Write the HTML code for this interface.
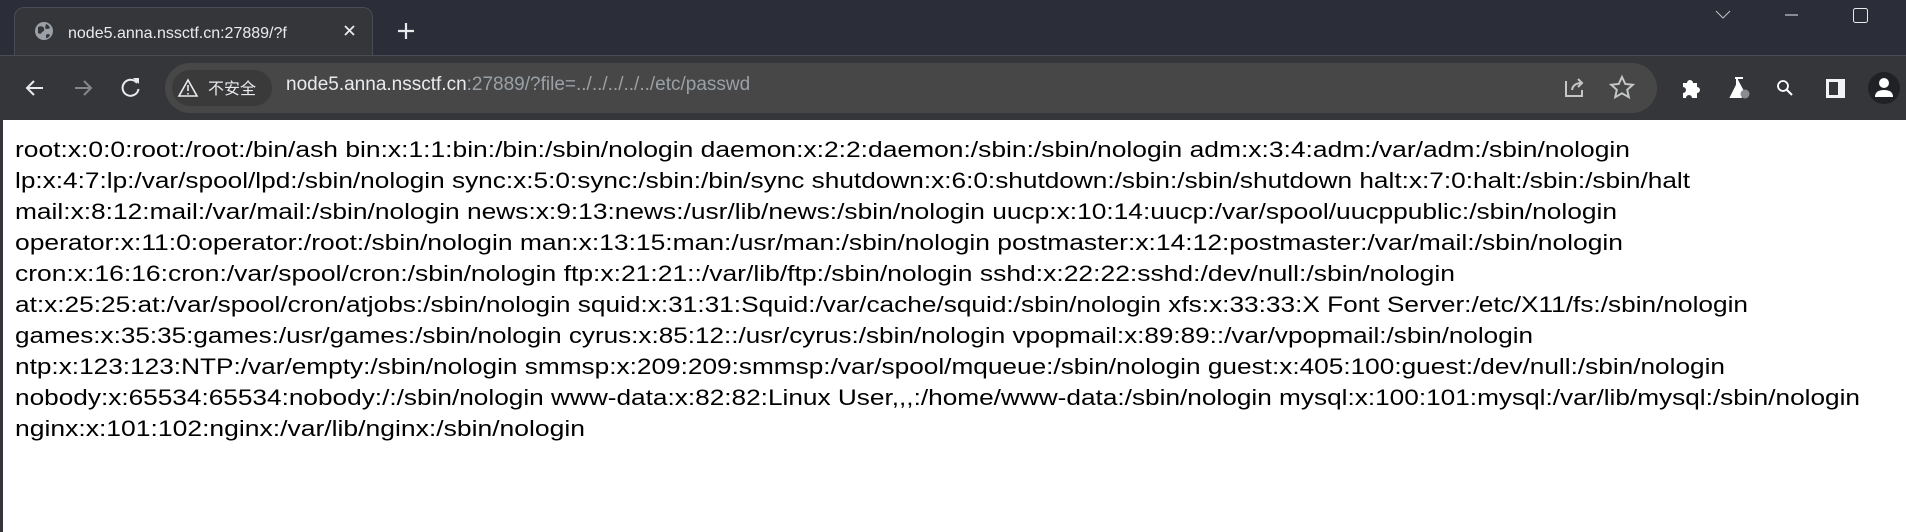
<!DOCTYPE html>
<html><head><meta charset="utf-8"><style>
html,body{margin:0;padding:0;width:1906px;height:532px;overflow:hidden;background:#fff;font-family:"Segoe UI","Liberation Sans","Noto Sans CJK SC",sans-serif}
.strip{position:absolute;left:0;top:0;width:1906px;height:55px;background:#2b2e39}
.tb{position:absolute;left:0;top:55px;width:1906px;height:65px;background:#35363a;border-top:1px solid #4a4c54;box-sizing:border-box}
.tab{position:absolute;left:14px;top:7px;width:359px;height:49px;background:#35363a;border-radius:10px 10px 0 0;border:1px solid #4a4c54;border-bottom:none;box-sizing:border-box}
.omni{position:absolute;left:165px;top:63px;width:1492px;height:50px;background:#474747;border-radius:25px}
.chip{position:absolute;left:172px;top:70px;width:100px;height:36px;background:#3a3a3b;border-radius:18px}
.t{position:absolute;color:#e8eaed;white-space:nowrap}
.lb{position:absolute;left:0;top:120px;width:3px;height:412px;background:#35363a}
</style></head><body>
<div class="strip"></div>
<div class="tab"></div>
<svg style="position:absolute;left:0;top:0" width="1906" height="120">
<circle cx="44" cy="31" r="9" fill="#9aa0a6"/>
<path d="M38 27 q4 -2 6 1 q1 3 -2 4 q-1 3 -4 1z M46 24 q3 1 4 4 q-3 2 -5 0z M46 35 q2 -2 4 0 q-1 3 -4 3z" fill="#35363a"/>
<text x="68" y="38" font-family="Segoe UI,Liberation Sans,sans-serif" font-size="16" fill="#e8eaed">node5.anna.nssctf.cn:27889/?f</text>
<path d="M345 26 l9 9 M354 26 l-9 9" stroke="#e8eaed" stroke-width="1.8"/>
<path d="M406 23 v16 M398 31 h16" stroke="#e8eaed" stroke-width="2.2"/>
<path d="M1716 11 l7 7 l7 -7" stroke="#c0c2c6" fill="none" stroke-width="1"/>
<path d="M1785 15 h13" stroke="#e8eaed" stroke-width="1"/>
<rect x="1853.5" y="8.5" width="14" height="14" rx="2" fill="none" stroke="#e8eaed" stroke-width="1"/>
</svg>
<div class="tb"></div>
<div class="omni"></div>
<div class="chip"></div>
<svg style="position:absolute;left:0;top:55px" width="1906" height="65">
<path d="M27 33 h16 M34 26 l-7 7 l7 7" stroke="#e8eaed" stroke-width="2" fill="none"/>
<path d="M75 33 h16 M84 26 l7 7 l-7 7" stroke="#85878a" stroke-width="2" fill="none"/>
<path d="M137 28 a8 8 0 1 0 1.5 6" stroke="#e8eaed" stroke-width="2" fill="none"/>
<path d="M133 23 h6 v6z" fill="#e8eaed"/>
<path d="M188 25 l9 16 h-18z" fill="none" stroke="#e8eaed" stroke-width="1.6"/>
<path d="M188 30 v6 M188 38 v1.5" stroke="#e8eaed" stroke-width="1.6"/>
<path d="M1566 26 v15 h16 v-6 M1572 35 q1 -7 10 -7 M1578 24 l4 4 l-4 4" stroke="#c4c7c5" stroke-width="2" fill="none"/>
<path d="M1622 22 l3.3 7 7.5 .8 -5.6 5 1.6 7.4 -6.8 -3.9 -6.8 3.9 1.6 -7.4 -5.6 -5 7.5 -.8z" fill="none" stroke="#c4c7c5" stroke-width="2"/>
<path d="M1683 28 h4 a3 3 0 0 1 6 0 h4 v4 a3 3 0 0 1 0 6 v5 h-5 a3 3 0 0 0 -6 0 h-3 v-5 a3 3 0 0 0 0 -6z" fill="#fff"/>
<path d="M1735 23 h8 M1737 23 v7 l-6 12 h10 l3 -6" fill="#fff" stroke="#fff" stroke-width="2"/>
<circle cx="1745" cy="39" r="4.5" fill="#8a8c90"/>
<circle cx="1783" cy="31" r="5" stroke="#fff" stroke-width="1.8" fill="none"/>
<path d="M1787 35 l5 5" stroke="#fff" stroke-width="2"/>
<rect x="1826" y="24" width="19" height="19" fill="#f1f3f4"/>
<rect x="1829" y="27" width="9" height="13" fill="#35363a"/>
<circle cx="1884" cy="33" r="16" fill="#202124"/>
<circle cx="1884" cy="28" r="5" fill="#fff"/>
<path d="M1875 42 q0 -7 9 -7 q9 0 9 7z" fill="#fff"/>
</svg>
<div class="t" style="left:208px;top:75px;font-size:16px;font-family:'Liberation Sans','Noto Sans CJK SC',sans-serif">不安全</div>
<div class="t" style="left:286px;top:74px;font-size:19px;font-family:'Segoe UI','Liberation Sans',sans-serif"><span>node5.anna.nssctf.cn</span><span style="color:#9aa0a6">:27889/?file=../../../../../etc/passwd</span></div>
<div class="lb"></div>
<svg style="position:absolute;left:0;top:0" width="1906" height="532" font-family="Segoe UI,Liberation Sans,sans-serif" font-size="22" fill="#000">
<text x="15" y="157" textLength="1615" lengthAdjust="spacingAndGlyphs">root:x:0:0:root:/root:/bin/ash bin:x:1:1:bin:/bin:/sbin/nologin daemon:x:2:2:daemon:/sbin:/sbin/nologin adm:x:3:4:adm:/var/adm:/sbin/nologin</text>
<text x="15" y="188" textLength="1675" lengthAdjust="spacingAndGlyphs">lp:x:4:7:lp:/var/spool/lpd:/sbin/nologin sync:x:5:0:sync:/sbin:/bin/sync shutdown:x:6:0:shutdown:/sbin:/sbin/shutdown halt:x:7:0:halt:/sbin:/sbin/halt</text>
<text x="15" y="219" textLength="1602" lengthAdjust="spacingAndGlyphs">mail:x:8:12:mail:/var/mail:/sbin/nologin news:x:9:13:news:/usr/lib/news:/sbin/nologin uucp:x:10:14:uucp:/var/spool/uucppublic:/sbin/nologin</text>
<text x="15" y="250" textLength="1608" lengthAdjust="spacingAndGlyphs">operator:x:11:0:operator:/root:/sbin/nologin man:x:13:15:man:/usr/man:/sbin/nologin postmaster:x:14:12:postmaster:/var/mail:/sbin/nologin</text>
<text x="15" y="281" textLength="1440" lengthAdjust="spacingAndGlyphs">cron:x:16:16:cron:/var/spool/cron:/sbin/nologin ftp:x:21:21::/var/lib/ftp:/sbin/nologin sshd:x:22:22:sshd:/dev/null:/sbin/nologin</text>
<text x="15" y="312" textLength="1733" lengthAdjust="spacingAndGlyphs">at:x:25:25:at:/var/spool/cron/atjobs:/sbin/nologin squid:x:31:31:Squid:/var/cache/squid:/sbin/nologin xfs:x:33:33:X Font Server:/etc/X11/fs:/sbin/nologin</text>
<text x="15" y="343" textLength="1518" lengthAdjust="spacingAndGlyphs">games:x:35:35:games:/usr/games:/sbin/nologin cyrus:x:85:12::/usr/cyrus:/sbin/nologin vpopmail:x:89:89::/var/vpopmail:/sbin/nologin</text>
<text x="15" y="374" textLength="1710" lengthAdjust="spacingAndGlyphs">ntp:x:123:123:NTP:/var/empty:/sbin/nologin smmsp:x:209:209:smmsp:/var/spool/mqueue:/sbin/nologin guest:x:405:100:guest:/dev/null:/sbin/nologin</text>
<text x="15" y="405" textLength="1845" lengthAdjust="spacingAndGlyphs">nobody:x:65534:65534:nobody:/:/sbin/nologin www-data:x:82:82:Linux User,,,:/home/www-data:/sbin/nologin mysql:x:100:101:mysql:/var/lib/mysql:/sbin/nologin</text>
<text x="15" y="436" textLength="570" lengthAdjust="spacingAndGlyphs">nginx:x:101:102:nginx:/var/lib/nginx:/sbin/nologin</text>
</svg>
</body></html>
